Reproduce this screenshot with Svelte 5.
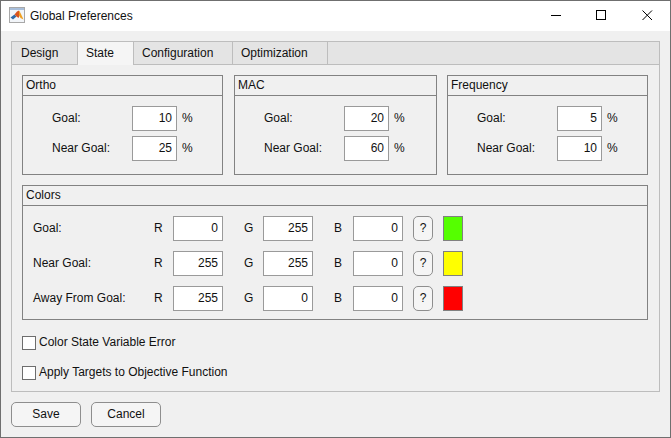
<script>
  const goals = [
    { name: 'Ortho', goal: 10, near: 25, cls: 'ortho' },
    { name: 'MAC', goal: 20, near: 60, cls: 'mac' },
    { name: 'Frequency', goal: 5, near: 10, cls: 'freq' }
  ];
  const colors = [
    { name: 'Goal:', r: 0, g: 255, b: 0, swatch: 'green' },
    { name: 'Near Goal:', r: 255, g: 255, b: 0, swatch: 'yellow' },
    { name: 'Away From Goal:', r: 255, g: 0, b: 0, swatch: 'red' }
  ];
  const tabs = ['Design', 'State', 'Configuration', 'Optimization'];
</script>

<div class="window">
  <span class="edge top"></span>
  <span class="edge bottom"></span>
  <header class="titlebar">
    <svg class="logo" width="16" height="16" viewBox="0 0 16 16">
      <rect x="0.5" y="0.5" width="15" height="15" fill="#f2f5f9" stroke="#a8a8a8" />
      <rect x="1" y="1" width="14" height="2" fill="#a9bfdb" />
      <path d="M1.5 10.5 L5.5 7.5 L7.5 9.5 L4 12.5 Z" fill="#2f6aa8" />
      <path d="M5.5 7.5 L8 4.5 L10 3.5 L11 7.5 L9.5 11 L7.5 9.5 Z" fill="#d9541e" />
      <path d="M10 3.5 L11.5 6 L14.5 12.5 L11.5 11 L10 8 Z" fill="#f0a020" />
    </svg>
    <span class="title">Global Preferences</span>
    <div class="controls">
      <svg width="10" height="10" viewBox="0 0 10 10"><path d="M0 5.5 H10" stroke="#000" fill="none" /></svg>
      <svg width="10" height="10" viewBox="0 0 10 10"><rect x="0.5" y="0.5" width="9" height="9" stroke="#000" fill="none" /></svg>
      <svg class="close" width="11" height="11" viewBox="0 0 11 11"><path d="M0.5 0.5 L10 10 M10 0.5 L0.5 10" stroke="#000" fill="none" /></svg>
    </div>
  </header>

  <main class="body">
    <section class="tabpanel">
      <nav class="tabs">
        {#each tabs as t}
          <div class="tab" class:active={t === 'State'}>{t}</div>
        {/each}
      </nav>
      <div class="content">
        <div class="row3">
          {#each goals as g}
            <div class="panel {g.cls}">
              <div class="ptitle">{g.name}</div>
              <div class="goalgrid">
                <span class="lbl">Goal:</span>
                <div class="field">{g.goal}</div>
                <span class="lbl">%</span>
                <span class="lbl">Near Goal:</span>
                <div class="field">{g.near}</div>
                <span class="lbl">%</span>
              </div>
            </div>
          {/each}
        </div>

        <div class="panel colors">
          <div class="ptitle">Colors</div>
          <div class="colorrows">
            {#each colors as c}
              <div class="colorrow">
                <span class="lbl cname">{c.name}</span>
                <span class="lbl ch">R</span>
                <div class="field wide">{c.r}</div>
                <span class="lbl ch g">G</span>
                <div class="field wide">{c.g}</div>
                <span class="lbl ch g">B</span>
                <div class="field wide">{c.b}</div>
                <div class="q">?</div>
                <div class="swatch {c.swatch}"></div>
              </div>
            {/each}
          </div>
        </div>

        <label class="check"><span class="box"></span><span class="ctext">Color State Variable Error</span></label>
        <label class="check"><span class="box"></span><span class="ctext">Apply Targets to Objective Function</span></label>
      </div>
    </section>

    <footer class="actions">
      <div class="btn">Save</div>
      <div class="btn">Cancel</div>
    </footer>
  </main>
</div>

<style>
  :global(body) {
    margin: 0;
    background: #f0f0f0;
  }
  .window {
    position: relative;
    width: 671px;
    height: 438px;
    box-sizing: border-box;
    display: flex;
    flex-direction: column;
    overflow: hidden;
    border: 1px solid #6f6f6f;
    background: #f0f0f0;
    font-family: "Liberation Sans", Arial, sans-serif;
    font-size: 12px;
    color: #111;
  }
  .edge {
    position: absolute;
    height: 1px;
    background: #1c2630;
  }
  .edge.top { top: -1px; left: 24px; width: 120px; }
  .edge.bottom { bottom: -1px; left: 24px; width: 131px; }
  .titlebar {
    height: 30px;
    flex: none;
    background: #fff;
    display: flex;
    align-items: flex-start;
    padding: 6px 0 0 8px;
    box-sizing: border-box;
  }
  .logo { margin-right: 5px; flex: none; }
  .title { font-size: 12px; line-height: 18px; }
  .controls {
    margin-left: auto;
    display: flex;
    gap: 35px;
    padding: 3px 17px 0 0;
  }
  .controls svg { display: block; }
  .controls .close { margin-left: 1px; }
  .body {
    flex: 1;
    padding: 10px 10px 0 10px;
    display: flex;
    flex-direction: column;
    min-height: 0;
  }
  .tabpanel {
    height: 351px;
    box-sizing: border-box;
    border: 1px solid #bdbdbd;
    display: flex;
    flex-direction: column;
    flex: none;
  }
  .tabs {
    height: 22px;
    flex: none;
    display: flex;
    background: #e4e4e4;
    border-bottom: 1px solid #bdbdbd;
  }
  .tab {
    box-sizing: border-box;
    height: 22px;
    line-height: 22px;
    border-right: 1px solid #bdbdbd;
    flex: none;
    padding-left: 8px;
  }
  .tab:nth-child(1) { width: 66px; padding-left: 9px; }
  .tab:nth-child(2) { width: 56px; }
  .tab:nth-child(3) { width: 99px; }
  .tab:nth-child(4) { width: 95px; }
  .tab.active {
    background: #f5f5f5;
    height: 23px;
    position: relative;
  }
  .content {
    flex: 1;
    padding: 10px 10px 0 10px;
    display: flex;
    flex-direction: column;
  }
  .row3 {
    display: flex;
    width: 626px;
    gap: 11px;
  }
  .panel {
    box-sizing: border-box;
    border: 1px solid #828282;
  }
  .ortho { width: 201px; }
  .mac { width: 203px; }
  .freq { width: 201px; margin-left: -1px; }
  .row3 .panel { height: 100px; }
  .ptitle {
    height: 20px;
    box-sizing: border-box;
    border-bottom: 1px solid #828282;
    padding-left: 3px;
    line-height: 18px;
  }
  .goalgrid {
    display: grid;
    grid-template-columns: 75px 45px auto;
    grid-auto-rows: 25px;
    row-gap: 5px;
    column-gap: 5px;
    padding: 10px 0 0 29px;
    align-items: center;
  }
  .lbl {
    line-height: 14px;
    padding-bottom: 1px;
  }
  .field {
    box-sizing: border-box;
    height: 25px;
    border: 1px solid #9a9a9a;
    background: #fff;
    text-align: right;
    padding-right: 4px;
    line-height: 22px;
  }
  .colors {
    margin-top: 10px;
    height: 135px;
    width: 626px;
  }
  .colorrows {
    padding: 10px 0 0 10px;
    display: flex;
    flex-direction: column;
    gap: 10px;
  }
  .colorrow {
    display: flex;
    align-items: center;
    height: 25px;
  }
  .cname { width: 121px; flex: none; }
  .ch { width: 19px; flex: none; }
  .ch.g { width: 40px; padding-left: 21px; box-sizing: border-box; }
  .wide { width: 50px; flex: none; }
  .q {
    box-sizing: border-box;
    width: 20px;
    height: 25px;
    margin-left: 10px;
    border: 1px solid #8e8e8e;
    border-radius: 5px;
    background: #f5f5f5;
    text-align: center;
    line-height: 22px;
    flex: none;
  }
  .swatch {
    box-sizing: border-box;
    width: 20px;
    height: 25px;
    margin-left: 10px;
    border: 1px solid #808080;
    flex: none;
  }
  .green { background: #55ff00; }
  .yellow { background: #ffff00; }
  .red { background: #ff0000; }
  .check {
    display: flex;
    align-items: center;
    gap: 3px;
    height: 14px;
    margin-top: 16px;
  }
  .ctext { margin-top: -2px; }
  .box {
    box-sizing: border-box;
    width: 14px;
    height: 14px;
    border: 1px solid #6d6d6d;
    background: #fff;
    flex: none;
  }
  .actions {
    display: flex;
    gap: 10px;
    margin-top: 10px;
  }
  .btn {
    box-sizing: border-box;
    width: 70px;
    height: 25px;
    border: 1px solid #8e8e8e;
    border-radius: 5px;
    background: #f5f5f5;
    text-align: center;
    line-height: 22px;
  }
</style>
